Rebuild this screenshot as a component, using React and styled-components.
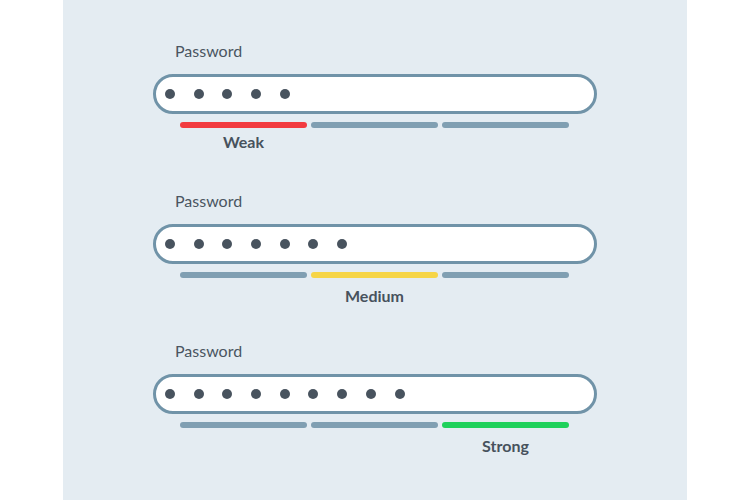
import React from "react";
import styled, { createGlobalStyle } from "styled-components";

const GlobalStyle = createGlobalStyle`
  html, body {
    margin: 0;
    padding: 0;
    background: #ffffff;
  }
  body {
    font-family: Lato, "Open Sans", sans-serif;
  }
`;

const Panel = styled.div`
  width: 624px;
  height: 500px;
  margin-left: 63px;
  box-sizing: border-box;
  padding: 41px 90px 0;
  background: #e4ecf2;
`;

const Field = styled.div`
  display: flex;
  flex-direction: column;
  height: 150px;
`;

const Label = styled.div`
  padding-left: 22px;
  font-size: 16px;
  line-height: 20px;
  color: #4a5561;
`;

const Input = styled.div`
  margin-top: 13px;
  height: 40px;
  box-sizing: border-box;
  border: 3px solid #7093a8;
  border-radius: 20px;
  background: #ffffff;
  display: flex;
  align-items: center;
  gap: 18.7px;
  padding-left: 9px;
`;

const Dot = styled.span`
  width: 10px;
  height: 10px;
  border-radius: 50%;
  background: #48535e;
`;

const Meter = styled.div`
  margin: 8px 28px 0 27px;
  display: grid;
  grid-template-columns: repeat(3, 1fr);
  column-gap: 4px;
`;

const Bar = styled.div`
  height: 6px;
  border-radius: 3px;
  background: ${(p) => p.$color || "#809fb2"};
`;

const Strength = styled.div`
  grid-column: ${(p) => p.$col};
  margin-top: ${(p) => p.$offset}px;
  text-align: center;
  font-size: 16px;
  font-weight: 700;
  line-height: 20px;
  color: #47525d;
`;

const levels = [
  { name: "Weak", dots: 5, col: 1, color: "#f23b40", offset: 4 },
  { name: "Medium", dots: 7, col: 2, color: "#f6d547", offset: 8 },
  { name: "Strong", dots: 9, col: 3, color: "#1fd15b", offset: 8 },
];

export default function App() {
  return (
    <>
      <GlobalStyle />
      <Panel>
        {levels.map((lv) => (
          <Field key={lv.name}>
            <Label>Password</Label>
            <Input>
              {Array.from({ length: lv.dots }).map((_, i) => (
                <Dot key={i} />
              ))}
            </Input>
            <Meter>
              {[1, 2, 3].map((c) => (
                <Bar key={c} $color={c === lv.col ? lv.color : null} />
              ))}
              <Strength $col={lv.col} $offset={lv.offset}>
                {lv.name}
              </Strength>
            </Meter>
          </Field>
        ))}
      </Panel>
    </>
  );
}
